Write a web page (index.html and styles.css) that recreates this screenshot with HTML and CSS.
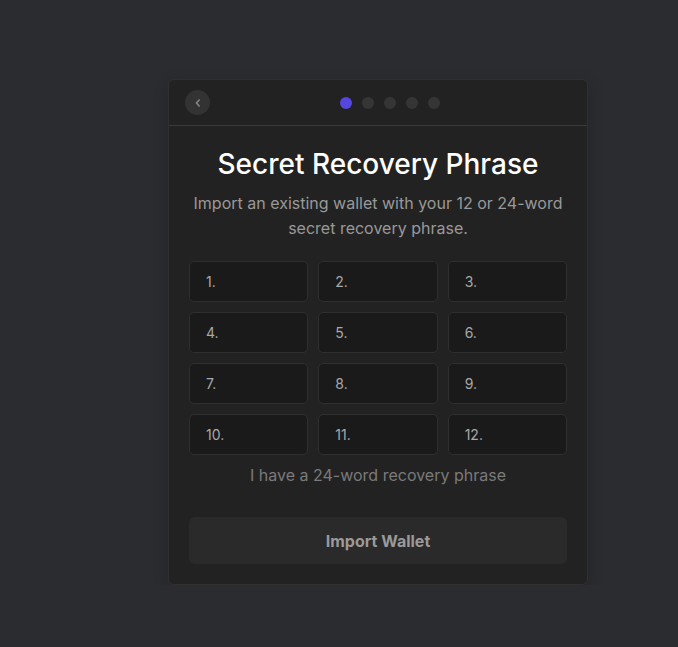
FILE: index.html
```html
<!DOCTYPE html>
<html lang="en">
<head>
<meta charset="utf-8">
<title>Secret Recovery Phrase</title>
<link rel="stylesheet" href="styles.css">
</head>
<body>
<div class="card">
  <div class="card-header">
    <button class="back-btn" aria-label="Back">
      <svg width="10" height="10" viewBox="0 0 10 10"><path d="M6.2 2 L3.4 5 L6.2 8" fill="none" stroke="#8a8a8a" stroke-width="1.5" stroke-linecap="round" stroke-linejoin="round"/></svg>
    </button>
    <div class="dots">
      <span class="dot active"></span>
      <span class="dot"></span>
      <span class="dot"></span>
      <span class="dot"></span>
      <span class="dot"></span>
    </div>
  </div>
  <div class="card-body">
    <h1 class="title">Secret Recovery Phrase</h1>
    <p class="subtitle">Import an existing wallet with your 12 or 24-word secret recovery phrase.</p>
    <div class="grid">
      <div class="word">1.</div>
      <div class="word">2.</div>
      <div class="word">3.</div>
      <div class="word">4.</div>
      <div class="word">5.</div>
      <div class="word">6.</div>
      <div class="word">7.</div>
      <div class="word">8.</div>
      <div class="word">9.</div>
      <div class="word">10.</div>
      <div class="word">11.</div>
      <div class="word">12.</div>
    </div>
    <div class="toggle">I have a 24-word recovery phrase</div>
    <button class="import-btn">Import Wallet</button>
  </div>
</div>
</body>
</html>
```

FILE: styles.css
```css
* { box-sizing: border-box; }
html, body {
  margin: 0;
  padding: 0;
  background: #2b2c30;
  font-family: Inter, "Noto Sans", sans-serif;
}
body {
  padding-top: 79px;
  padding-left: 168px;
}
.card {
  width: 420px;
  background: #222222;
  border: 1px solid #303030;
  border-radius: 6px;
  box-shadow: 0 4px 16px rgba(0,0,0,0.18);
}
.card-header {
  height: 46px;
  padding: 0 18px 0 16px;
  border-bottom: 1px solid #393939;
  display: flex;
  align-items: center;
}
.back-btn {
  flex: none;
  width: 25px;
  height: 25px;
  border-radius: 50%;
  border: none;
  background: #333333;
  padding: 0;
  display: flex;
  align-items: center;
  justify-content: center;
}
.dots {
  flex: 1;
  display: flex;
  justify-content: center;
  gap: 10px;
}
.dot {
  width: 12px;
  height: 12px;
  border-radius: 50%;
  background: #353535;
}
.dot.active { background: #5446df; }
.card-body {
  padding: 20px 20px 20px 20px;
  display: flex;
  flex-direction: column;
  align-items: center;
}
.title {
  margin: 0;
  color: #ffffff;
  font-size: 28px;
  font-weight: 500;
  line-height: 36px;
}
.subtitle {
  margin: 9px 0 0 0;
  color: #999999;
  font-size: 16px;
  line-height: 25px;
  text-align: center;
  width: 380px;
}
.grid {
  margin-top: 20px;
  width: 378px;
  display: grid;
  grid-template-columns: repeat(3, 1fr);
  column-gap: 10px;
  row-gap: 10px;
}
.word {
  height: 41px;
  background: #1a1a1a;
  border: 1px solid #2f2f2f;
  border-radius: 5px;
  color: #a8a8a8;
  font-size: 14px;
  display: flex;
  align-items: center;
  padding-left: 16px;
}
.toggle {
  margin-top: 10px;
  color: #7a7a7a;
  font-size: 16px;
  line-height: 20px;
}
.import-btn {
  margin-top: 32px;
  width: 378px;
  height: 47px;
  border: none;
  border-radius: 6px;
  background: #2a2a2a;
  color: #9a9a9a;
  font-family: Inter, "Noto Sans", sans-serif;
  font-size: 16px;
  font-weight: 700;
}
```
